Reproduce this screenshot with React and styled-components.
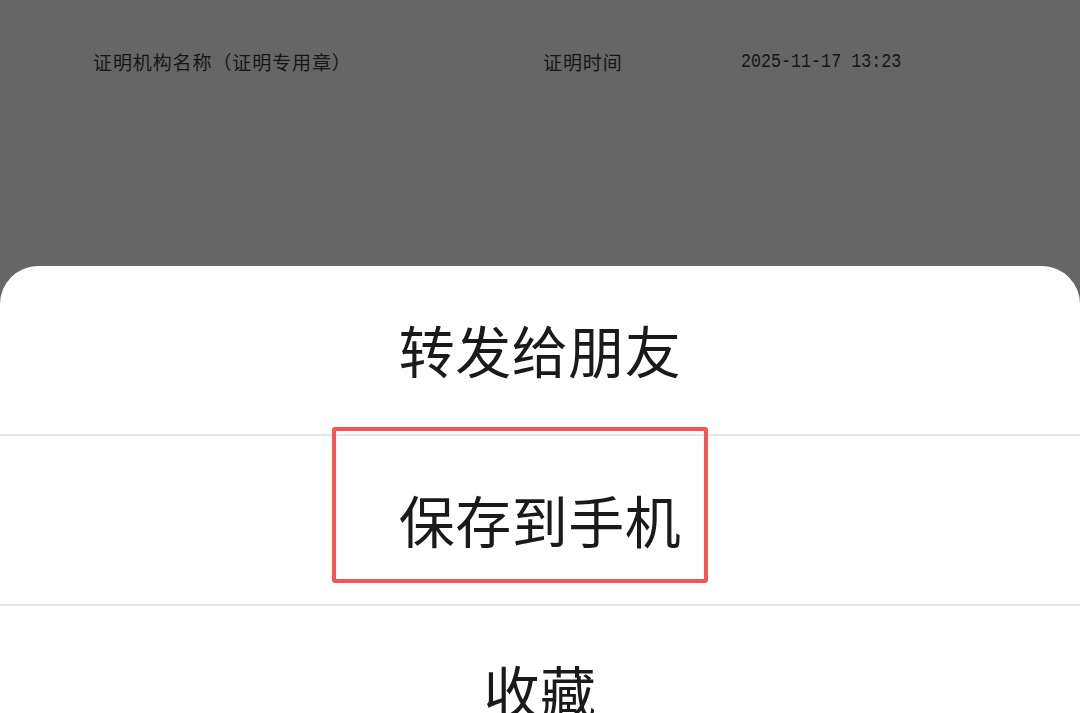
import React from "react";
import styled, { createGlobalStyle } from "styled-components";

const Global = createGlobalStyle`
  html, body { margin: 0; padding: 0; background: #666666; }
  body { font-family: "Noto Sans CJK SC", "Noto Sans", sans-serif; }
  #root { height: 713px; overflow: hidden; }
`;

const Page = styled.div`
  width: 1080px;
  height: 713px;
  display: flex;
  flex-direction: column;
  background: #666666;
  overflow: hidden;
`;

const Backdrop = styled.div`
  height: 266px;
  flex: none;
  box-sizing: border-box;
  padding: 48px 0 0 93px;
`;

const DocRow = styled.div`
  display: grid;
  grid-template-columns: 450px 198px auto;
  align-items: center;
  height: 26px;
  color: #161616;
`;

const DocLabel = styled.span`
  font-family: "Noto Sans CJK SC", sans-serif;
  font-size: 19px;
  font-weight: 400;
  letter-spacing: 0.9px;
  white-space: nowrap;
`;

const DocValue = styled.span`
  font-family: "Liberation Mono", monospace;
  font-size: 16.7px;
  white-space: nowrap;
  display: inline-block;
  transform: scaleY(1.18);
`;

const Sheet = styled.div`
  flex: 1;
  background: #ffffff;
  border-radius: 38px 38px 0 0;
  display: flex;
  flex-direction: column;
  position: relative;
`;

const Item = styled.div`
  height: ${(p) => (p.$divider ? "170px" : "168px")};
  flex: none;
  box-sizing: border-box;
  padding-bottom: 3px;
  display: flex;
  align-items: center;
  justify-content: center;
  font-size: 56px;
  color: #1a1a1a;
  letter-spacing: 0.5px;
  border-top: ${(p) => (p.$divider ? "2px solid #e5e5e5" : "none")};
`;

const Highlight = styled.div`
  position: absolute;
  left: 332px;
  top: 161px;
  width: 376px;
  height: 156px;
  box-sizing: border-box;
  border: 4px solid #f75555;
  border-radius: 3px;
  pointer-events: none;
`;

export default function App() {
  return (
    <Page>
      <Global />
      <Backdrop>
        <DocRow>
          <DocLabel>证明机构名称（证明专用章）</DocLabel>
          <DocLabel>证明时间</DocLabel>
          <DocValue>2025-11-17 13:23</DocValue>
        </DocRow>
      </Backdrop>
      <Sheet>
        <Item>转发给朋友</Item>
        <Item $divider>保存到手机</Item>
        <Item $divider>收藏</Item>
        <Highlight />
      </Sheet>
    </Page>
  );
}
